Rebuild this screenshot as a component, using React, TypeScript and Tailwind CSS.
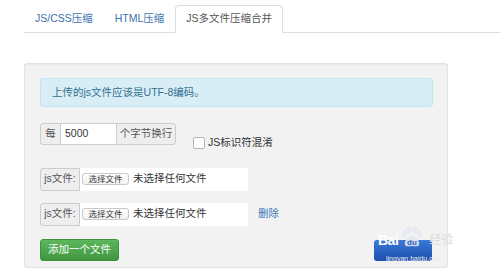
import React from "react";

function FileRow({ del }: { del?: boolean }) {
  return (
    <div className="flex items-center">
      <div className="flex h-[23px]">
        <div className="w-[40px] h-full bg-[#eeeeee] border border-[#cccccc] rounded-l-[3px] flex items-center justify-center text-[10.5px] text-[#555]">
          js文件:
        </div>
        <div className="w-[168px] h-full bg-white flex items-start pt-[4px] pl-[2px]">
          <div className="mt-[1px] h-[12px] w-[47px] border border-[#c9c9c9] rounded-[3px] bg-gradient-to-b from-white to-[#f1f1f1] flex items-center justify-center text-[8.5px] text-[#333] leading-none">
            选择文件
          </div>
          <div className="ml-[4px] text-[10.5px] leading-[12px] text-[#333]">未选择任何文件</div>
        </div>
      </div>
      {del && <div className="ml-[10px] text-[10.5px] text-[#3a78b8]">删除</div>}
    </div>
  );
}

export default function App() {
  return (
    <div className="relative w-[500px] h-[278px] overflow-hidden bg-white font-['Liberation_Sans','Noto_Sans_CJK_SC',sans-serif]">
      {/* Tabs */}
      <div className="pt-[5px] pl-[24px]">
        <div className="flex h-[28px] border-b border-[#dddddd] items-end">
          <div className="h-[27px] px-[11px] flex items-center text-[10.5px] text-[#3c72ad]">JS/CSS压缩</div>
          <div className="h-[27px] ml-[0px] px-[11px] flex items-center text-[10.5px] text-[#3c72ad]">HTML压缩</div>
          <div className="h-[28px] ml-[0px] -mb-px px-[10px] flex items-center text-[10.5px] text-[#555] bg-white border border-[#dddddd] border-b-white rounded-t-[4px]">
            JS多文件压缩合并
          </div>
        </div>
      </div>

      {/* Panel */}
      <div className="mt-[30px] ml-[24px] w-[424px] h-[205px] bg-[#f2f2f2] border border-[#e3e3e3] rounded-[3px] shadow-[inset_0_1px_1px_rgba(0,0,0,0.04)] px-[15px] pt-[14px]">
        <div className="h-[29px] w-[393px] bg-[#d9edf7] border border-[#bce8f1] rounded-[3px] pl-[11px] flex items-center text-[10.5px] text-[#31708f]">
          上传的js文件应该是UTF-8编码。
        </div>

        <div className="mt-[16px] flex items-start">
          <div className="flex h-[22px]">
            <div className="w-[21px] bg-[#eeeeee] border border-[#cccccc] rounded-l-[3px] flex items-center justify-center text-[10.5px] text-[#555]">
              每
            </div>
            <div className="w-[55px] bg-white border-y border-[#cccccc] pl-[4px] flex items-center text-[10.5px] text-[#333]">
              5000
            </div>
            <div className="w-[60px] bg-[#eeeeee] border border-[#cccccc] rounded-r-[3px] flex items-center justify-center text-[10.5px] text-[#555]">
              个字节换行
            </div>
          </div>
          <div className="ml-[17px] mt-[12px] flex items-center">
            <div className="w-[12px] h-[12px] bg-white border border-[#b5b5b5] rounded-[2px]" />
            <div className="ml-[3px] text-[10.5px] text-[#333]">JS标识符混淆</div>
          </div>
        </div>

        <div className="mt-[17px]">
          <FileRow />
        </div>
        <div className="mt-[12px]">
          <FileRow del />
        </div>

        <div className="mt-[13px] flex justify-between items-start">
          <div className="h-[22px] w-[79px] rounded-[3px] border border-[#3e8f3e] bg-gradient-to-b from-[#5cb85c] to-[#419641] flex items-center justify-center text-[10.5px] text-white">
            添加一个文件
          </div>
          <div className="mt-[1px] h-[21px] w-[58px] rounded-[3px] bg-gradient-to-b from-[#3a7ad6] to-[#1d4fae]" />
        </div>
      </div>

      {/* Baidu watermark */}
      <div className="absolute left-[378px] top-[232px] flex items-center">
        <span className="text-[14px] font-bold text-white leading-none tracking-[-0.5px]">Bai</span>
        <svg width="26" height="22" viewBox="0 0 26 22" className="ml-[1px] -mt-[6px]">
          <ellipse cx="5" cy="8" rx="2.6" ry="3.4" fill="#e4e8f0" opacity="0.9" />
          <ellipse cx="10" cy="4" rx="2.6" ry="3.4" fill="#e4e8f0" opacity="0.9" />
          <ellipse cx="16" cy="4" rx="2.6" ry="3.4" fill="#e4e8f0" opacity="0.9" />
          <ellipse cx="21" cy="8" rx="2.6" ry="3.4" fill="#e4e8f0" opacity="0.9" />
          <path d="M13 10 C8 10 5 16 6 19 C7 21 10 20 13 20 C16 20 19 21 20 19 C21 16 18 10 13 10 Z" fill="#e4e8f0" opacity="0.9" />
          <text x="8" y="19" fontSize="8" fontWeight="bold" fill="#2a5fc0">du</text>
        </svg>
        <span className="ml-[4px] text-[12px] text-[#dcdcdc] leading-none">经验</span>
      </div>
      <div className="absolute left-[386px] top-[255px] text-[7px] text-[#ececec] leading-none">jingyan.baidu.com</div>
    </div>
  );
}
